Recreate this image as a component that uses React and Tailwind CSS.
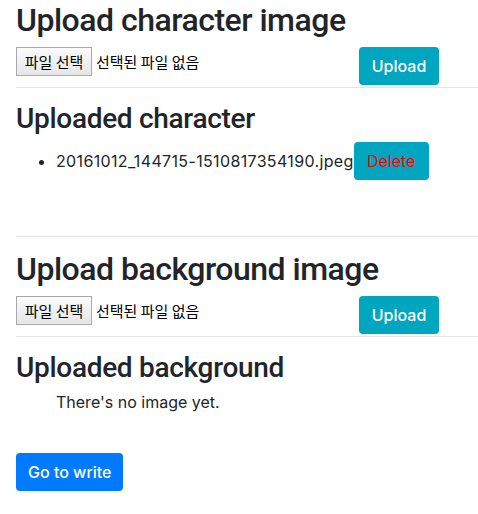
import React from "react";

function FileRow() {
  return (
    <div className="flex items-start">
      <div className="w-[343px] flex items-center">
        <span className="h-[29px] w-[76px] justify-center flex items-center border border-[#a9a9a9] bg-gradient-to-b from-[#fbfbfb] to-[#e6e6e6] text-[15px] text-black font-['Noto_Sans_CJK_KR',sans-serif] leading-none">
          파일 선택
        </span>
        <span className="ml-[4px] text-[15px] text-black font-['Noto_Sans_CJK_KR',sans-serif] leading-none">
          선택된 파일 없음
        </span>
      </div>
      <button className="h-[38px] w-[80px] rounded-[4px] bg-[#00a5bf] text-white text-[16px] font-medium leading-[1.5]">
        Upload
      </button>
    </div>
  );
}

export default function App() {
  return (
    <div className="pl-4 pt-[1px] bg-white text-[#212529] font-['Inter',sans-serif] min-h-[514px]">
      <h2 className="font-['Roboto',sans-serif] text-[32px] leading-[1.2] font-medium tracking-[-0.5px] mb-2">Upload character image</h2>
      <FileRow />
      <hr className="mt-[2px] border-t border-[#e5e5e5]" />
      <h3 className="font-['Roboto',sans-serif] mt-[14px] text-[28px] leading-[1.2] font-medium tracking-[-0.3px] mb-[6px]">Uploaded character</h3>
      <ul className="list-disc pl-10 text-[16px]">
        <li>
          <span className="tracking-[0.35px]">20161012_144715-1510817354190.jpeg</span>
          <button className="h-[38px] w-[75px] rounded-[4px] bg-[#00a5bf] text-[#ff0000] text-[16px] leading-[1.5]">
            Delete
          </button>
        </li>
      </ul>
      <hr className="mt-[56px] border-t border-[#e5e5e5]" />
      <h2 className="font-['Roboto',sans-serif] mt-[13px] text-[32px] leading-[1.2] font-medium tracking-[-0.5px] mb-2">Upload background image</h2>
      <FileRow />
      <hr className="mt-[2px] border-t border-[#e5e5e5]" />
      <h3 className="font-['Roboto',sans-serif] mt-[14px] text-[28px] leading-[1.2] font-medium tracking-[-0.3px] mb-[5px]">Uploaded background</h3>
      <p className="pl-10 text-[16px]">There's no image yet.</p>
      <button className="mt-[39px] h-[38px] px-3 rounded-[4px] bg-[#007bff] text-white text-[16px] font-medium leading-[1.5]">
        Go to write
      </button>
    </div>
  );
}
